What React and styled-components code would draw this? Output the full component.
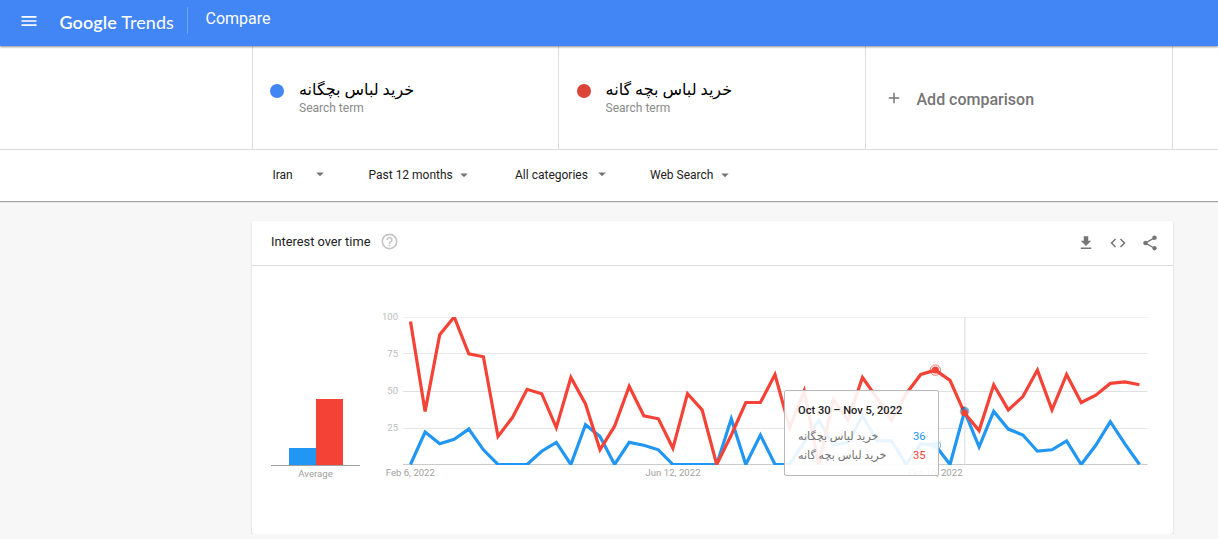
import React from 'react'
import styled, { createGlobalStyle } from 'styled-components'
import { MdMenu, MdAdd, MdArrowDropDown, MdHelpOutline, MdFileDownload, MdCode, MdShare } from 'react-icons/md'

const terms = [
  { name: 'خرید لباس بچگانه', color: '#4285f4', width: 306, left: 18 },
  { name: 'خرید لباس بچه گانه', color: '#db4437', width: 307, left: 18.6 },
]

const filters = [
  { label: 'Iran', width: 96, gap: 18.5, up: 2 },
  { label: 'Past 12 months', width: 146.5, gap: 2, up: 0 },
  { label: 'All categories', width: 135, gap: 5, up: 2 },
  { label: 'Web Search', width: 120, gap: 2.5, up: 0 },
]

const blue = [0, 22, 14, 17, 24, 10, 0, 0, 0, 9, 15, 0, 27, 19, 0, 15, 13, 10, 0, 0, 0, 0, 31, 0, 20, 0,
  0, 15, 30, 13, 15, 33, 16, 16, 0, 14, 13, 0, 36, 12, 36, 24, 20, 9, 10, 16, 0, 13, 29, 14, 0]
const red = [97, 36, 88, 100, 75, 73, 19, 32, 51, 48, 25, 59, 41, 10, 26, 53, 33, 31, 11, 48, 37, 0, 20, 42, 42, 61,
  25, 50, 0, 44, 30, 59, 45, 30, 48, 61, 64, 57, 35, 23, 54, 37, 46, 64, 37, 61, 42, 47, 55, 56, 54]

const px = (i) => 39.5 + i * 14.58
const py = (v) => 164.5 - v * 1.475
const line = (data) => data.map((v, i) => `${px(i).toFixed(1)},${py(v).toFixed(1)}`).join(' ')

const Chart = () => {
  return (
    <ChartSvg width="780" height="200" viewBox="0 0 780 200">
      <defs>
        <clipPath id="plot">
          <rect x="32" y="17" width="746" height="148" />
        </clipPath>
      </defs>
      <rect x="32" y="17" width="744.5" height="1" fill="#efefef" />
      <rect x="32" y="53" width="744.5" height="1" fill="#e6e6e6" />
      <rect x="32" y="91" width="744.5" height="1" fill="#e0e0e0" />
      <rect x="32" y="128" width="744.5" height="1" fill="#e6e6e6" />
      <rect x="32" y="164" width="744.5" height="1" fill="#ccc" />
      <rect x="593" y="17" width="1.5" height="147" fill="#e8e8e8" />
      {[100, 75, 50, 25].map((v) => (
        <text key={v} x="27" y={py(v) + 3} textAnchor="end" fontSize="9.5" fill="#bdbdbd">{v}</text>
      ))}
      <g clipPath="url(#plot)" fill="none" strokeWidth="3.2" strokeMiterlimit="4">
        <polyline points={line(blue)} stroke="#2196f3" />
        <polyline points={line(red)} stroke="#f44336" />
      </g>
      <circle cx={px(36)} cy={py(64)} r="3.5" fill="#f44336" />
      <circle cx={px(36)} cy={py(64)} r="5.2" fill="none" stroke="#f44336" strokeWidth="0.7" />
      <circle cx={px(36)} cy={py(13)} r="3.5" fill="#2196f3" />
      <circle cx={px(36)} cy={py(13)} r="5.2" fill="none" stroke="#2196f3" strokeWidth="0.7" />
      <circle cx={px(38)} cy={py(36)} r="4.8" fill="#000" opacity="0.3" />
      <circle cx={px(38)} cy={py(36)} r="3.6" fill="#2196f3" opacity="0.6" />
      <circle cx={px(38)} cy={py(35)} r="3.2" fill="#f44336" />
      <g fontSize="9.5" fill="#a0a0a0" textAnchor="middle">
        <text x="39.3" y="176" textLength="49">Feb 6, 2022</text>
        <text x="302" y="176" textLength="55">Jun 12, 2022</text>
        <text x="564.5" y="176" textLength="54">Oct 16, 2022</text>
      </g>
    </ChartSvg>
  )
}

const App = () => {
  return (
    <>
      <GlobalStyle />
      <Header>
        <MdMenu className='menu' />
        <Logo><b>Google</b> Trends</Logo>
        <PageName>Compare</PageName>
      </Header>
      <Terms>
        {terms.map((term) => (
          <Term key={term.name} $width={term.width} $left={term.left}>
            <Dot $color={term.color} />
            <div>
              <TermName dir="rtl">{term.name}</TermName>
              <TermKind>Search term</TermKind>
            </div>
          </Term>
        ))}
        <AddTerm>
          <MdAdd />
          <span>Add comparison</span>
        </AddTerm>
      </Terms>
      <Filters>
        {filters.map((f) => (
          <Filter key={f.label} $width={f.width} $gap={f.gap} $up={f.up}>
            {f.label}
            <MdArrowDropDown />
          </Filter>
        ))}
      </Filters>
      <Card>
        <CardHead>
          <h2>Interest over time</h2>
          <MdHelpOutline className='help' />
          <Actions>
            <MdFileDownload />
            <MdCode />
            <MdShare />
          </Actions>
        </CardHead>
        <CardBody>
          <Average>
            <Bars>
              <Bar $height={17} $color='#2196f3' />
              <Bar $height={66} $color='#f44336' />
            </Bars>
            <p>Average</p>
          </Average>
          <Chart />
          <Tooltip>
            <h3>Oct 30 – Nov 5, 2022</h3>
            <TooltipRow $color='#2196f3'>
              <bdi>{terms[0].name}</bdi>
              <span>36</span>
            </TooltipRow>
            <TooltipRow $color='#f44336'>
              <bdi>{terms[1].name}</bdi>
              <span>35</span>
            </TooltipRow>
          </Tooltip>
        </CardBody>
      </Card>
    </>
  )
}

const GlobalStyle = createGlobalStyle`
  * {
    box-sizing: border-box;
  }
  body {
    margin: 0;
    background: #f7f7f7;
    font-family: Roboto, "DejaVu Sans", sans-serif;
    overflow: hidden;
  }
  h2, h3, p {
    margin: 0;
    font-weight: 400;
  }
`;

const Header = styled.header`
  position: relative;
  z-index: 1;
  display: flex;
  height: 46px;
  background: #4285f4;
  color: #fff;
  box-shadow: 0 1px 2px rgba(0, 0, 0, 0.45);
  .menu {
    width: 20px;
    height: 20px;
    margin: 10.5px 0 0 18.5px;
  }
`;

const Logo = styled.div`
  width: 127.5px;
  margin-left: 21px;
  padding-top: 11px;
  font-family: Lato, sans-serif;
  font-size: 18px;
  line-height: 23px;
  letter-spacing: 0.1px;
  white-space: nowrap;
  b {
    font-weight: 600;
  }
`;

const PageName = styled.div`
  height: 27px;
  margin-top: 7px;
  padding-left: 17.5px;
  border-left: 1px solid #6ea2f7;
  font-size: 16px;
  line-height: 23px;
`;

const Terms = styled.div`
  display: flex;
  height: 104px;
  padding-left: 252px;
  background: #fff;
  border-bottom: 1px solid #dcdcdc;
`;

const Term = styled.div`
  display: flex;
  width: ${({ $width }) => $width}px;
  padding: 34px 0 0 ${({ $left }) => $left}px;
  border-left: 1px solid #dcdcdc;
`;

const Dot = styled.span`
  width: 14px;
  height: 14px;
  margin: 4px 15px 0 -1px;
  border-radius: 50%;
  background: ${({ $color }) => $color};
`;

const TermName = styled.p`
  color: #000;
  font-size: 16px;
  line-height: 19px;
`;

const TermKind = styled.p`
  color: #8a8a8a;
  font-size: 12px;
  line-height: 19px;
`;

const AddTerm = styled.div`
  display: flex;
  align-items: center;
  width: 308px;
  padding: 3px 0 0 19px;
  border: solid #dcdcdc;
  border-width: 0 1px;
  color: #757575;
  font-size: 16px;
  font-weight: 500;
  svg {
    width: 18px;
    height: 18px;
    margin: -3px 13.5px 0 0;
  }
`;

const Filters = styled.div`
  display: flex;
  height: 51px;
  padding: 0 0 2px 272.5px;
  background: #fff;
  box-shadow: 0 1px 1px rgba(0, 0, 0, 0.35);
`;

const Filter = styled.div`
  display: flex;
  align-items: center;
  width: ${({ $width }) => $width}px;
  color: #212121;
  font-size: 12px;
  white-space: nowrap;
  svg {
    width: 18px;
    height: 18px;
    margin: ${({ $up }) => -$up}px 0 0 ${({ $gap }) => $gap}px;
    color: #757575;
  }
`;

const Card = styled.section`
  width: 921px;
  height: 313px;
  margin: 20px 0 0 252px;
  border-radius: 2px;
  background: #fff;
  box-shadow: 0 1px 2px rgba(0, 0, 0, 0.22);
`;

const CardHead = styled.div`
  display: flex;
  align-items: center;
  height: 45px;
  padding: 0 14px 3px 19px;
  border-bottom: 1px solid #dcdcdc;
  h2 {
    color: #212121;
    font-size: 12.8px;
  }
  .help {
    width: 19px;
    height: 19px;
    margin: -1px 0 0 10px;
    color: #c4c4c4;
  }
`;

const Actions = styled.div`
  display: flex;
  gap: 14px;
  margin: 2px 0.5px 0 auto;
  color: #757575;
  svg {
    width: 18px;
    height: 18px;
  }
`;

const CardBody = styled.div`
  position: relative;
  display: flex;
  padding: 34px 0 0 19px;
`;

const Average = styled.div`
  width: 89px;
  margin-top: 100px;
  color: #a0a0a0;
  font-size: 9.6px;
  line-height: 16px;
  text-align: center;
`;

const Bars = styled.div`
  display: flex;
  justify-content: center;
  align-items: flex-end;
  height: 66px;
  border-bottom: 1px solid #9e9e9e;
`;

const Bar = styled.div`
  width: 27px;
  height: ${({ $height }) => $height}px;
  background: ${({ $color }) => $color};
`;

const ChartSvg = styled.svg`
  margin-left: 11px;
  font-family: Roboto, sans-serif;
`;

const Tooltip = styled.div`
  position: absolute;
  left: 532px;
  top: 124px;
  width: 155px;
  height: 86px;
  padding: 12px 12.5px 0 13px;
  border: 1px solid #b8b8b8;
  border-radius: 2px;
  background: rgba(255, 255, 255, 0.9);
  h3 {
    margin-bottom: 8px;
    color: #212121;
    font-size: 11.1px;
    font-weight: 500;
    line-height: 16px;
  }
`;

const TooltipRow = styled.div`
  display: flex;
  justify-content: space-between;
  height: 19px;
  color: #757575;
  font-size: 11.2px;
  line-height: 19px;
  span {
    color: ${({ $color }) => $color};
  }
`;

export default App
